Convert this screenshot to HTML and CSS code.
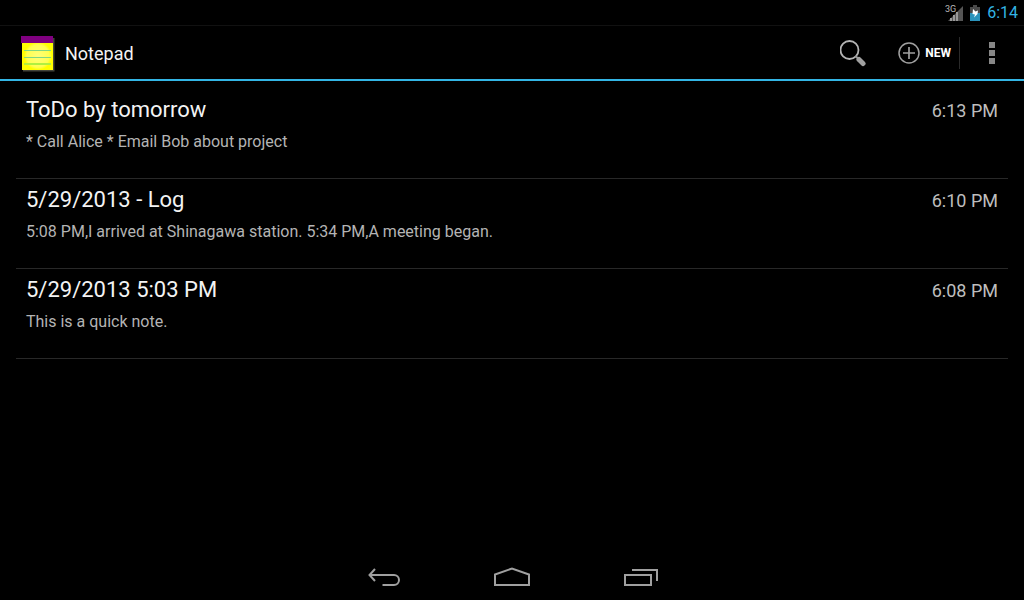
FILE: index.html
```html
<!DOCTYPE html>
<html lang="en">
<head>
    <meta charset="UTF-8">
    <meta name="viewport" content="width=device-width, initial-scale=1.0">
    <title>Notepad</title>
    <link rel="stylesheet" href="styles.css">
</head>
<body>
    <div class="status-bar">
        <svg class="signal" width="20" height="18" viewBox="0 0 20 18" aria-hidden="true">
            <path d="M18 2V17H3Z" fill="#555"/>
            <path d="M6 17v-3M9 17v-6M12 17v-9" stroke="#999" stroke-width="2"/>
            <path d="M0 0h10v9H0z" fill="#000"/>
            <text x="0" y="8" class="signal-label">3G</text>
        </svg>
        <svg class="battery" width="10" height="16" viewBox="0 0 10 16" aria-hidden="true">
            <path d="M3 0h4v2h3v14H0V2h3z" fill="#4a4a4a"/>
            <path d="M0 8h10v8H0z" fill="#2b93bb"/>
            <path d="M3 4l2.500 2.500L8 5.500 7.500 9 4 12.500 5 9.500 2.500 9z" fill="#fff"/>
        </svg>
        <span class="clock">6:14</span>
    </div>

    <header class="action-bar">
        <svg class="app-icon" width="34" height="38" viewBox="0 -2 34 38" aria-hidden="true">
            <defs>
                <radialGradient id="paper">
                    <stop offset="0" stop-color="#ffff78"/>
                    <stop offset="0.8" stop-color="#ffff50"/>
                    <stop offset="1" stop-color="#ffff00"/>
                </radialGradient>
            </defs>
            <path d="M2 2h31.500v33.500H2z" fill="#44443a"/>
            <path d="M1 6h31v28H1z" fill="#ff0"/>
            <circle cx="17" cy="20" r="14" fill="url(#paper)"/>
            <path d="M0 0h32v7H0z" fill="#800080"/>
            <path d="M3 14.500h27M3 21.500h27" stroke="#80d880"/>
            <path d="M3 28h27" stroke="#b0f040" stroke-width="2"/>
        </svg>
        <h1>Notepad</h1>
        <button class="search" aria-label="Search">
            <svg width="28" height="28" viewBox="0 -1 28 28">
                <circle cx="9.500" cy="10" r="9" fill="none" stroke="#b4b4b4" stroke-width="1.800"/>
                <path d="M15.500 16l3 3" stroke="#999" stroke-width="2"/>
                <path d="M19 19.500l4 4" stroke="#a0a0a0" stroke-width="5" stroke-linecap="round"/>
            </svg>
        </button>
        <button class="new">
            <svg width="22" height="22" viewBox="0 0 22 22" fill="none" stroke="#a0a0a0">
                <circle cx="11" cy="11" r="10" stroke-width="1.500"/>
                <path d="M5 11h12M11 5v12" stroke-width="1.700"/>
            </svg>
            NEW
        </button>
        <button class="more" aria-label="More options">
            <svg width="6" height="22" viewBox="0 0 6 22" fill="#878787">
                <path d="M0 0h6v6H0zM0 8h6v6H0zM0 16h6v6H0z"/>
            </svg>
        </button>
    </header>

    <main>
        <ul class="notes">
            <li class="note">
                <h2>ToDo by tomorrow</h2>
                <time>6:13 PM</time>
                <p>* Call Alice * Email Bob about project</p>
            </li>
            <li class="note">
                <h2>5/29/2013 - Log</h2>
                <time>6:10 PM</time>
                <p>5:08 PM,I arrived at Shinagawa station. 5:34 PM,A meeting began.</p>
            </li>
            <li class="note">
                <h2>5/29/2013 5:03 PM</h2>
                <time>6:08 PM</time>
                <p>This is a quick note.</p>
            </li>
        </ul>
    </main>

    <nav class="nav-bar">
        <button aria-label="Back">
            <svg width="36" height="20" viewBox="0 0 36 20" fill="none" stroke="#a0a0a0" stroke-width="2">
                <path d="M9 2L3.500 8L9 14M3 8h25a5 5 0 0 1 0 10H16.500"/>
            </svg>
        </button>
        <button aria-label="Home">
            <svg width="36" height="20" viewBox="0 0 36 20" fill="none" stroke="#a0a0a0" stroke-width="2">
                <path d="M1 18V7.500L18 1.500l17 6V18z"/>
            </svg>
        </button>
        <button aria-label="Recent apps">
            <svg width="36" height="20" viewBox="0 0 36 20" fill="none" stroke="#a0a0a0" stroke-width="2">
                <path d="M3 8h26v10H3zM10 3h25v11"/>
            </svg>
        </button>
    </nav>
</body>
</html>
```
FILE: styles.css
```css
* {
    box-sizing: border-box;
}
body {
    display: flex;
    flex-direction: column;
    min-height: 100vh;
    margin: 0;
    background-color: #000;
    color: #f3f3f3;
    font-family: Roboto, sans-serif;
}
h1, h2, p, ul {
    margin: 0;
    padding: 0;
    font-weight: normal;
}
button {
    display: flex;
    align-items: center;
    justify-content: center;
    padding: 0;
    border: 0;
    background: none;
    color: #fff;
    font: bold 12px Roboto, sans-serif;
}

/* status bar */
.status-bar {
    display: flex;
    align-items: center;
    justify-content: flex-end;
    height: 26px;
    padding-right: 6px;
    border-bottom: 1px solid #111;
}
.signal {
    margin-right: 5px;
}
.signal-label {
    fill: #b8b8b8;
    font-size: 9px;
}
.battery {
    margin-right: 7px;
}
.clock {
    color: #33b5e5;
    font-size: 16px;
}

/* action bar */
.action-bar {
    display: flex;
    align-items: center;
    height: 55px;
    padding: 1px 0 0 21px;
    border-bottom: 2px solid #33b5e5;
}
.app-icon {
    margin-right: 10px;
}
.action-bar h1 {
    flex: 1;
    font-size: 18px;
}
.search {
    width: 56px;
    height: 52px;
}
.new {
    gap: 5px;
    height: 32px;
    padding: 0 8px 0 16px;
    border-right: 1px solid #2a2a2a;
}
.more {
    width: 64px;
    height: 52px;
}

/* note list */
main {
    flex: 1;
    padding: 8px 16px;
}
.notes {
    list-style: none;
}
.note {
    display: grid;
    grid-template-columns: 1fr auto;
    align-items: baseline;
    align-content: start;
    row-gap: 5px;
    min-height: 90px;
    padding: 6px 10px;
    border-bottom: 1px solid #282828;
}
.note h2 {
    font-size: 22px;
    line-height: 30px;
}
.note time {
    color: #bebebe;
    font-size: 18px;
}
.note p {
    grid-column: 1 / 3;
    color: #b4b4b4;
    font-size: 16px;
    line-height: 24px;
}

/* navigation bar */
.nav-bar {
    display: flex;
    align-items: center;
    justify-content: center;
    height: 48px;
    padding-top: 2px;
}
.nav-bar button {
    width: 128px;
    height: 46px;
}
```
